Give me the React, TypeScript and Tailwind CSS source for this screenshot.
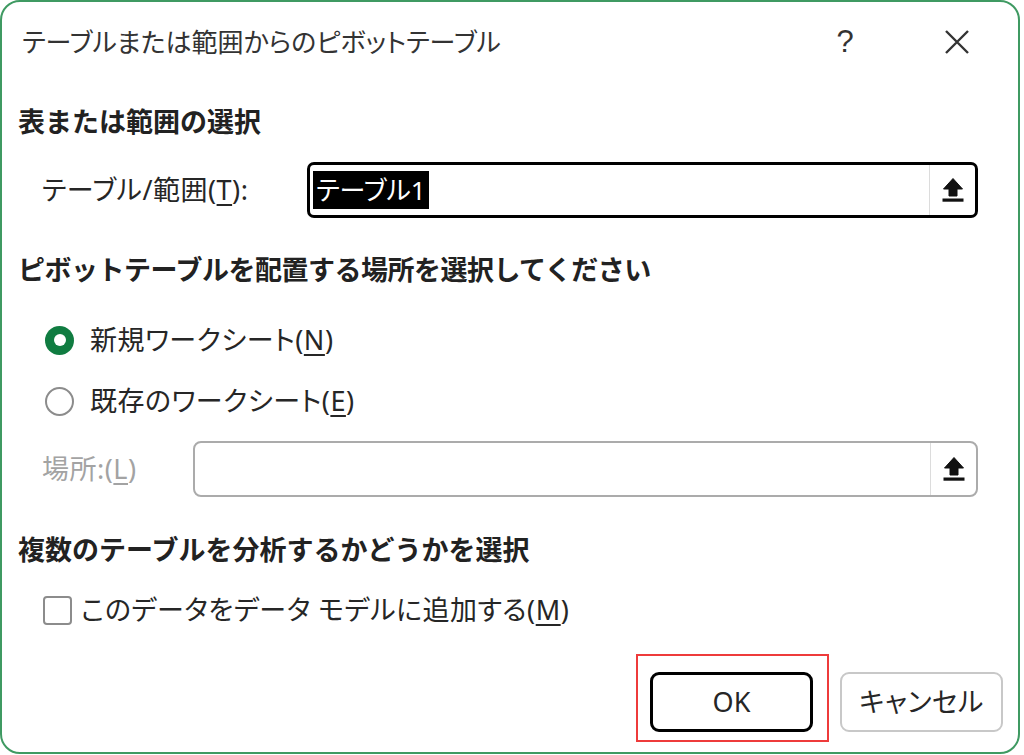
import React from 'react';

const jp = "font-['Noto_Sans','Noto_Sans_CJK_JP',sans-serif]";
const palt = "[font-feature-settings:'palt'] tracking-[0.5px]";

function UploadIcon() {
  return (
    <svg width="24" height="26" viewBox="0 0 24 26" aria-hidden>
      <path d="M12 1.5 L21.5 12 H16 V19 H8 V12 H2.5 Z" fill="#111" strokeLinejoin="round" stroke="#111" strokeWidth={1} />
      <rect x="1.5" y="21.5" width="21" height="3.2" fill="#111" />
    </svg>
  );
}

function RefInput({ enabled, width, children }: { enabled: boolean; width: string; children?: React.ReactNode }) {
  return (
    <div
      className={`flex h-[56px] items-stretch ${width} ${
        enabled ? 'rounded-[7px] border-[3px] border-black' : 'rounded-[8px] border-2 border-[#ababab]'
      }`}
    >
      <div className="flex flex-1 items-center pl-[3px]">{children}</div>
      <div className="flex w-[46px] items-center justify-center border-l border-[#dcdcdc]">
        <UploadIcon />
      </div>
    </div>
  );
}

function Key({ k }: { k: string }) {
  return (
    <>
      (<span className="underline decoration-[1.5px] underline-offset-[4px]">{k}</span>)
    </>
  );
}

export default function App() {
  return (
    <div className={`h-[755px] w-[1024px] bg-white ${jp}`}>
      <div className="flex h-[754px] w-[1020px] flex-col overflow-hidden rounded-[20px] border-2 border-[#3f9a62] bg-white text-[#262626]">
        {/* title bar */}
        <div className="flex h-[80px] shrink-0 items-center">
          <div className={`flex-1 pl-[20px] text-[26px] text-[#333] ${palt} tracking-normal`}>
            テーブルまたは範囲からのピボットテーブル
          </div>
          <div className="w-[30px] text-center font-['Liberation_Sans',sans-serif] text-[31px] text-[#333]">?</div>
          <div className="ml-[82px] mr-[46px] flex h-[30px] w-[30px] items-center justify-center">
            <svg width="26" height="26" viewBox="0 0 26 26" aria-hidden>
              <path d="M2 2 L24 24 M24 2 L2 24" stroke="#333" strokeWidth={2.4} />
            </svg>
          </div>
        </div>

        {/* section 1 */}
        <div className="flex h-[80px] shrink-0 items-center pl-[16px] text-[27px] font-bold text-[#222]">表または範囲の選択</div>
        <div className={`flex h-[56px] shrink-0 items-center text-[27px] ${palt}`}>
          <div className="w-[305px] pl-[40px]">
            テーブル/範囲<Key k="T" />:
          </div>
          <RefInput enabled width="w-[671px]">
            <span className="bg-black px-[3px] text-[26px] leading-[38px] tracking-normal text-white">テーブル1</span>
          </RefInput>
        </div>

        {/* section 2 */}
        <div className="mt-[28px] flex h-[48px] shrink-0 items-center pl-[16px] text-[27px] font-bold tracking-[-0.5px] text-[#222]">
          ピボットテーブルを配置する場所を選択してください
        </div>
        <div className={`mt-[22px] flex h-[48px] shrink-0 items-center pl-[43px] text-[27px] ${palt}`}>
          <span className="flex h-[29px] w-[29px] items-center justify-center rounded-full bg-[#107c41]">
            <span className="h-[12px] w-[12px] rounded-full bg-white" />
          </span>
          <span className="ml-[16px]">
            新規ワークシート<Key k="N" />
          </span>
        </div>
        <div className={`mt-[13px] flex h-[48px] shrink-0 items-center pl-[43px] text-[27px] ${palt}`}>
          <span className="h-[29px] w-[29px] rounded-full border-2 border-[#8c8c8c]" />
          <span className="ml-[16px]">
            既存のワークシート<Key k="E" />
          </span>
        </div>
        <div className={`mt-[16px] flex h-[56px] shrink-0 items-center text-[27px] ${palt}`}>
          <div className="w-[191px] pl-[40px] text-[#a3a3a3]">
            場所:<Key k="L" />
          </div>
          <RefInput enabled={false} width="w-[785px]" />
        </div>

        {/* section 3 */}
        <div className="mt-[29px] flex h-[48px] shrink-0 items-center pl-[16px] text-[27px] font-bold text-[#222]">
          複数のテーブルを分析するかどうかを選択
        </div>
        <div className={`mt-[12px] flex h-[48px] shrink-0 items-center pl-[41px] text-[27px] ${palt}`}>
          <span className="h-[29px] w-[29px] rounded-[4px] border-2 border-[#8c8c8c]" />
          <span className="ml-[9px]">
            このデータをデータ モデルに追加する<Key k="M" />
          </span>
        </div>

        {/* buttons */}
        <div className="mt-[38px] flex h-[60px] shrink-0 items-stretch justify-end gap-[27px] pr-[15px] text-[27px]">
          <div className="relative">
            <button className="flex h-[60px] w-[163px] items-center justify-center rounded-[9px] border-[3px] border-black bg-white text-[#262626]">
              OK
            </button>
            <div className="pointer-events-none absolute -left-[14px] -top-[18px] h-[88px] w-[193px] border-2 border-[#ee3b3b]" />
          </div>
          <button className={`flex h-[60px] w-[163px] items-center justify-center rounded-[9px] border-2 border-[#c8c8c8] bg-white text-[#262626] ${palt}`}>
            キャンセル
          </button>
        </div>
      </div>
    </div>
  );
}
